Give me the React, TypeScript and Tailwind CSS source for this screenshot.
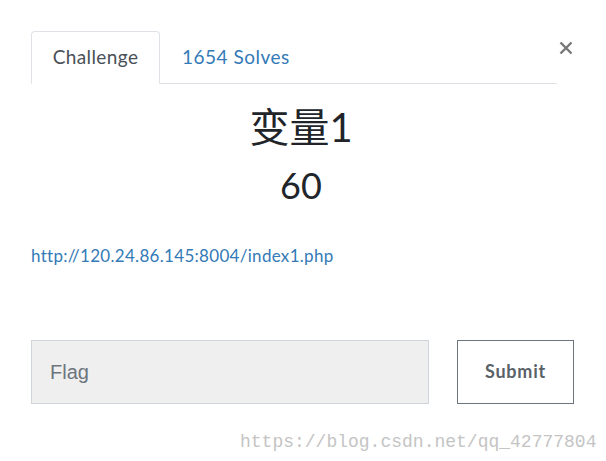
import React from "react";

export default function App() {
  return (
    <div className="w-[606px] h-[461px] bg-white relative font-['Lato','Noto_Sans_CJK_SC',sans-serif] text-[#212529]">
      {/* Close */}
      <button className="absolute left-[557px] top-[39px] w-[18px] h-[18px] flex items-center justify-center">
        <svg width="14" height="14" viewBox="0 0 14 14">
          <path d="M1.5 1.5 L12.5 12.5 M12.5 1.5 L1.5 12.5" stroke="#777" strokeWidth="2.4" />
        </svg>
      </button>

      <div className="pt-[31px] pl-[31px] pr-[49px]">
        {/* Tabs */}
        <div className="flex border-b border-[#dee2e6] h-[53px]">
          <div className="w-[129px] h-[53px] -mb-px border border-[#dee2e6] border-b-white bg-white rounded-t-[4px] flex items-center justify-center text-[19px] tracking-[0.4px] text-[#495057]">
            Challenge
          </div>
          <div className="h-[53px] pl-[22px] flex items-center text-[19px] tracking-[0.5px] text-[#337ab7]">
            1654 Solves
          </div>
        </div>

        {/* Title */}
        <div className="flex flex-col items-center pt-[19px] pl-[14px]">
          <h2 className="text-[40px] leading-[48px]">变量1</h2>
          <h3 className="text-[36px] leading-[40px] mt-[14px]">60</h3>
        </div>

        {/* Link */}
        <div className="mt-[38px]">
          <a className="text-[17px] tracking-[0.3px] text-[#337ab7]">http://120.24.86.145:8004/index1.php</a>
        </div>

        {/* Form */}
        <div className="flex mt-[71px] gap-[28px] w-[543px]">
          <div className="w-[398px] h-[64px] shrink-0 bg-[#efefef] border border-[#ced4da] flex items-center px-[18px] text-[20px] text-[#6c757d] font-['Liberation_Sans',sans-serif]">
            Flag
          </div>
          <button className="w-[117px] h-[64px] shrink-0 border border-[#6c757d] bg-white text-[18px] text-[#5a6268] font-bold tracking-[0.8px] flex items-center justify-center">
            Submit
          </button>
        </div>
      </div>

      {/* Watermark */}
      <div className="absolute left-[240px] top-[429px] text-[18px] text-[#c4c4c4] font-['Liberation_Mono',monospace]">
        https://blog.csdn.net/qq_42777804
      </div>
    </div>
  );
}
